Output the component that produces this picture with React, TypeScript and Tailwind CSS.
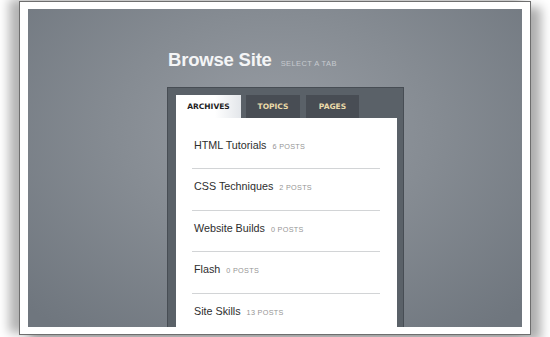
import React from "react";

const items = [
  { label: "HTML Tutorials", count: "6 posts" },
  { label: "CSS Techniques", count: "2 posts" },
  { label: "Website Builds", count: "0 posts" },
  { label: "Flash", count: "0 posts" },
  { label: "Site Skills", count: "13 posts" },
];

export default function App() {
  return (
    <div className="w-[550px] h-[337px] bg-white overflow-hidden" style={{ fontFamily: '"Liberation Sans", Arial, sans-serif' }}>
      <div className="ml-[19px] mt-[1px] w-[512px] h-[334px] border border-[#6e6e6e] bg-white pt-[7px] pl-[8px] pr-[8px] shadow-[-10px_-2px_10px_rgba(0,0,0,0.3),10px_6px_10px_rgba(0,0,0,0.32)]">
        <div className="relative w-[494px] h-[318px] overflow-hidden bg-[radial-gradient(ellipse_70%_80%_at_50%_38%,#989da4_0%,#868c93_45%,#6f767e_100%)]">
          <div className="pl-[140px] pt-[40px] flex items-baseline gap-[9px]">
            <span className="text-[18.5px] leading-[22px] font-bold text-[#f4f5f6] tracking-[-0.2px]">Browse Site</span>
            <span className="text-[7.5px] uppercase tracking-[0.4px] text-[#c6cacf]">Select a tab</span>
          </div>
          <div className="ml-[139px] mt-[16px] w-[237px] h-[260px] border border-[#474d54] bg-[#5a6168] pl-[8px] pr-[6px] pt-[7px]">
            <div className="flex gap-[5px] h-[23px]" style={{ fontFamily: '"DejaVu Sans", Verdana, sans-serif' }}>
              <div className="w-[65px] h-[23px] flex items-center justify-center bg-[linear-gradient(90deg,#ffffff_0%,#ffffff_60%,#e3e6ea_100%)] text-[7.5px] font-bold text-[#1e1e1e] uppercase">Archives</div>
              <div className="w-[54px] h-[23px] flex items-center justify-center bg-[#484d54] text-[7.5px] font-bold text-[#ecdcaa] uppercase">Topics</div>
              <div className="ml-[1px] w-[53px] h-[23px] flex items-center justify-center bg-[#484d54] text-[7.5px] font-bold text-[#ecdcaa] uppercase">Pages</div>
            </div>
            <div className="bg-white h-[230px] pt-[10px] pl-[16px] pr-[17px]">
              {items.map((it, i) => (
                <div key={i} className={`pt-[11px] pb-[15.5px] pl-[2px] flex items-baseline gap-[6px] ${i < items.length - 1 ? "border-b border-[#d2d4d6]" : ""}`}>
                  <span className="text-[10.75px] leading-[13px] text-[#2e2e2e]">{it.label}</span>
                  <span className="text-[7.25px] uppercase tracking-[0.3px] text-[#959595]">{it.count}</span>
                </div>
              ))}
            </div>
          </div>
        </div>
      </div>
    </div>
  );
}
